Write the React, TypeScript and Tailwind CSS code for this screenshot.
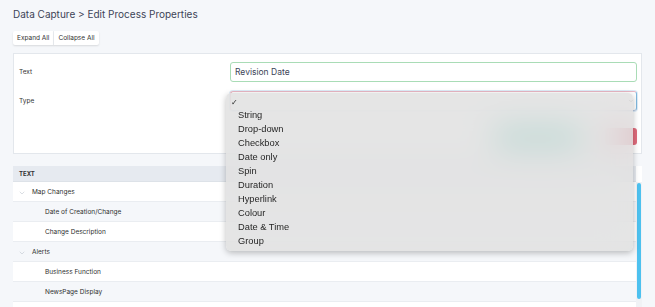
import { ChevronDown } from "lucide-react";

const types = [
  "String",
  "Drop-down",
  "Checkbox",
  "Date only",
  "Spin",
  "Duration",
  "Hyperlink",
  "Colour",
  "Date & Time",
  "Group",
];

const rows = [
  { label: "Map Changes", group: true },
  { label: "Date of Creation/Change" },
  { label: "Change Description" },
  { label: "Alerts", group: true },
  { label: "Business Function" },
  { label: "NewsPage Display" },
  { label: "" },
];

export default function App() {
  return (
    <div className="relative h-[307px] w-[655px] overflow-hidden bg-[#f5f7fa] pl-[13px] pr-[13px] pt-[8px] text-[#3d4457] font-['Inter',sans-serif]">
      <h1 className="text-[10px] leading-[13px] font-normal">Data Capture &gt; Edit Process Properties</h1>

      <div className="mt-[10px] flex">
        <button className="h-[14px] bg-white px-[4px] text-[6.5px] leading-[14px] text-[#333] shadow-[0_1px_2px_rgba(0,0,0,0.12)] rounded-l-[2px] border-r border-[#eceff3]">
          Expand All
        </button>
        <button className="h-[14px] bg-white px-[4px] text-[6.5px] leading-[14px] text-[#333] shadow-[0_1px_2px_rgba(0,0,0,0.12)] rounded-r-[2px]">
          Collapse All
        </button>
      </div>

      {/* form card */}
      <div className="mt-[8px] h-[101px] border border-[#e3e7ec] bg-white pl-[5px] pr-[4px] pt-[8px]">
        <div className="flex items-center">
          <span className="w-[211px] text-[6.5px] leading-[10px] text-[#333] -mt-[1px]">Text</span>
          <div className="flex h-[20px] flex-1 items-center rounded-[3px] border border-[#a9dcb6] px-[4px] text-[8.5px] text-[#3d4457]">
            Revision Date
          </div>
        </div>
        <div className="mt-[9px] flex items-center">
          <span className="w-[211px] text-[6.5px] leading-[10px] text-[#333] -mt-[1px]">Type</span>
          <div className="flex h-[20px] flex-1 items-center justify-end rounded-[3px] border border-[#e9b7c4] border-r-[#7fb8dd] border-b-[#b9c9e0] px-[2px] shadow-[0_0_0_1px_rgba(160,200,235,0.35)]">
            <ChevronDown size={6} strokeWidth={3} className="text-[#555]" />
          </div>
        </div>
        <div className="mt-[17px] flex justify-end gap-[24px]">
          <button className="h-[18px] w-[86px] rounded-[3px] bg-[#22b59a]" />
          <button className="h-[17px] w-[32px] rounded-[3px] bg-[#e06b7c]" />
        </div>
      </div>

      {/* table */}
      <div className="mt-[12px] flex">
        <div className="flex-1">
          <div className="flex h-[16px] items-center border-b border-[#dde2e8] bg-[#e6eaf0] pl-[6px] text-[6px] font-bold text-[#333]">
            TEXT
          </div>
          {rows.map((r, i) => (
            <div
              key={i}
              className={`flex h-[20px] items-center border-b border-[#eaedf1] pt-[2px] text-[6.5px] text-[#2f2f2f] ${
                i % 2 === 0 ? "bg-white" : "bg-[#f5f7fa]"
              }`}
            >
              {r.group ? (
                <div className="flex items-center pl-[5px]">
                  <ChevronDown size={8} strokeWidth={1.5} className="text-[#b5bcc6]" />
                  <span className="ml-[6px]">{r.label}</span>
                </div>
              ) : (
                <span className="pl-[32px]">{r.label}</span>
              )}
            </div>
          ))}
        </div>
        <div className="w-[6px] bg-[#f0f2f5]">
          <div className="h-[16px] bg-white" />
          <div className="mx-auto mt-[1px] h-[116px] w-[4px] rounded-full bg-[#4dc1ef]" />
        </div>
      </div>

      {/* native select menu */}
      <div className="absolute left-[226px] top-[93px] h-[158px] w-[407px] rounded-[5px] bg-[#dedede]/80 backdrop-blur-lg shadow-[0_2px_6px_rgba(0,0,0,0.25)] font-['Liberation_Sans',sans-serif] text-[9.3px] text-[#262626]">
        <div className="h-[15px] pl-[5px] pt-[5px] text-[8px] leading-[10px]">✓</div>
        {types.map((t) => (
          <div key={t} className="h-[14px] pl-[12px] leading-[14px]">
            {t}
          </div>
        ))}
      </div>
    </div>
  );
}
